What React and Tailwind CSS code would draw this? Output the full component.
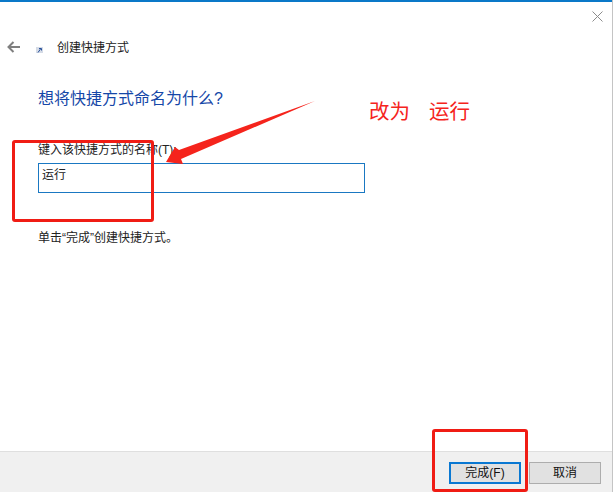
const cjk = "font-['Liberation_Sans','Noto_Sans_CJK_SC',sans-serif]";

function Annotations() {
  return (
    <>
      <div className="absolute left-[12px] top-[140px] w-[142px] h-[82px] border-[3px] border-[#f01c14] rounded-[3px]" />
      <div className="absolute left-[432px] top-[429px] w-[96px] h-[63px] border-[3px] border-[#f01c14] rounded-[3px]" />
      <svg className="absolute left-0 top-0" width="613" height="492" fill="none">
        <path d="M315 101 L179 150 L175 147 L166 162 L183 164 L181 159 Z" fill="#f5241c" />
      </svg>
      <p className="absolute left-[369px] top-[99px] flex gap-[19px] text-[20.5px] leading-[26px] text-[#f5241c]">
        <span>改为</span>
        <span>运行</span>
      </p>
    </>
  );
}

export default function App() {
  return (
    <div className={`relative w-[613px] h-[492px] flex flex-col bg-white overflow-hidden border-r border-[#c4c4c4] ${cjk}`}>
      <div className="h-[2px] bg-[#0a78c8]" />

      <div className="flex-1 flex flex-col">
        <div className="flex justify-end pt-[9px] pr-[9px]">
          <svg width="11" height="11" viewBox="0 0 11 11" stroke="#8c8c8c" strokeWidth="1">
            <path d="M0.5 0.5 L10.5 10.5 M10.5 0.5 L0.5 10.5" />
          </svg>
        </div>

        <div className="flex items-center mt-[15px] h-[20px]">
          <svg className="ml-[7px]" width="13" height="12" viewBox="0 0 13 12" fill="none" stroke="#7f7f7f" strokeWidth="2">
            <path d="M13 6 H1.5 M6.5 1 L1.5 6 L6.5 11" />
          </svg>
          <svg className="ml-[16px] mt-[6px]" width="7" height="6" viewBox="0 0 7 6">
            <rect width="7" height="6" fill="#d5dbe6" />
            <path d="M2 5.5 L4.5 2 M3 1.5 H5.5 V3.5" stroke="#27509a" strokeWidth="1" fill="none" />
          </svg>
          <p className="ml-[14px] mt-[1px] text-[12px] leading-[20px] text-[#222]">创建快捷方式</p>
        </div>

        <div className="pl-[38px] pt-[31px]">
          <h1 className="text-[16px] leading-[22px] font-normal text-[#1547a8]">想将快捷方式命名为什么?</h1>
          <p className="mt-[31px] text-[12px] leading-[18px] text-[#222]">键入该快捷方式的名称(T):</p>
          <div className="mt-[4px] w-[327px] h-[30px] border border-[#1a78c2] pl-[3px] pt-[2px] text-[12px] leading-[18px] text-[#222]">
            运行
          </div>
          <p className="mt-[36px] text-[12px] leading-[18px] text-[#222]">单击“完成”创建快捷方式。</p>
        </div>
      </div>

      <div className="h-[41px] flex justify-end gap-[8px] pt-[10px] pr-[11px] bg-[#f0f0f0] border-t border-[#dfdfdf]">
        <button className="w-[72px] h-[22px] text-[12px] text-[#111] bg-[#e1e1e1] border-2 border-[#0a78d2]">完成(F)</button>
        <button className="w-[72px] h-[22px] text-[12px] text-[#111] bg-[#e1e1e1] border border-[#adadad]">取消</button>
      </div>

      <Annotations />
    </div>
  );
}
